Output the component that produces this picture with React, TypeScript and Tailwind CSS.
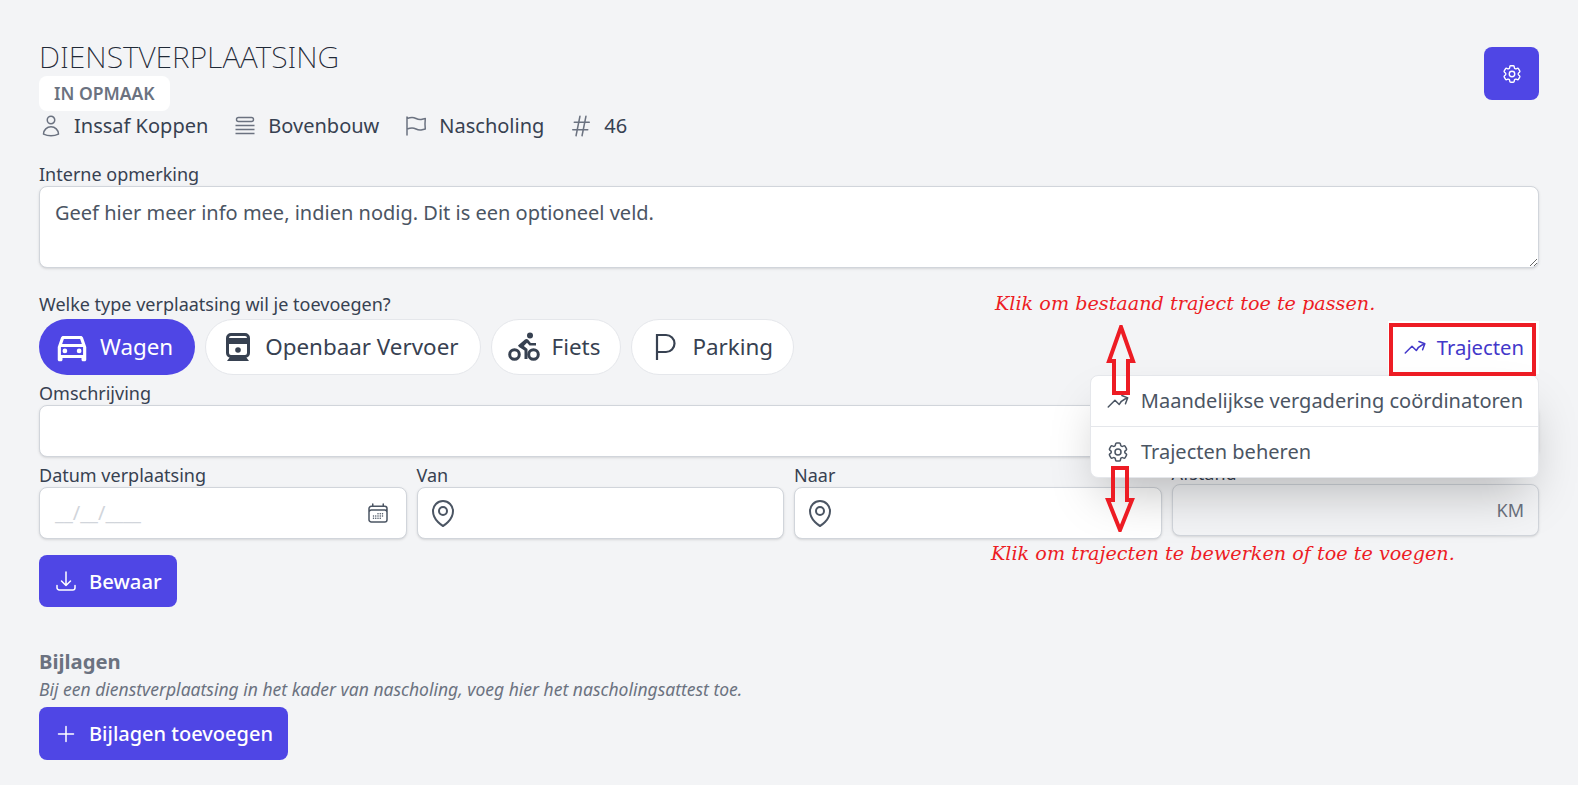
import {
  HiOutlineArrowDownTray,
  HiOutlineArrowTrendingUp,
  HiOutlineCalendarDays,
  HiOutlineCog6Tooth,
  HiOutlineFlag,
  HiOutlineHashtag,
  HiOutlineMapPin,
  HiOutlinePlus,
  HiOutlineUser,
} from "react-icons/hi2";
import { MdOutlineDirectionsCar } from "react-icons/md";

const inputClass =
  "bg-white border border-[#d1d5db] rounded-lg shadow-sm h-[52px] flex items-center";
const labelClass = "text-[18px] leading-[22px] text-[#374151]";
const noteClass =
  "absolute text-[#ed1c24] text-[19.2px] leading-[24px] italic whitespace-nowrap [font-family:'DejaVu_Serif',cursive]";

function StackIcon() {
  return (
    <svg viewBox="0 0 24 24" className="w-[24px] h-[24px]" fill="none" stroke="currentColor" strokeWidth="1.4">
      <rect x="3.5" y="3.5" width="17" height="4" rx="2" />
      <path d="M2.5 11.5h19M2.5 15.5h19M2.5 19.5h19" />
    </svg>
  );
}

function TrainIcon() {
  return (
    <svg viewBox="0 0 26 28" className="w-[26px] h-[28px]" fill="currentColor">
      <path
        fillRule="evenodd"
        d="M6 0h14a5 5 0 0 1 5 5v15a5 5 0 0 1-5 5H6a5 5 0 0 1-5-5V5a5 5 0 0 1 5-5Zm0 3a2 2 0 0 0-2 2v15a2 2 0 0 0 2 2h14a2 2 0 0 0 2-2V5a2 2 0 0 0-2-2H6Z"
      />
      <rect x="4" y="5" width="18" height="6" />
      <circle cx="13" cy="17" r="2.8" />
      <path d="M5 24h16l3 4H2Z" />
    </svg>
  );
}

function BikeIcon() {
  return (
    <svg viewBox="0 0 32 30" className="w-[32px] h-[30px]" fill="none" stroke="currentColor">
      <circle cx="6.5" cy="22.5" r="4.8" strokeWidth="3" />
      <circle cx="25.5" cy="22.5" r="4.8" strokeWidth="3" />
      <circle cx="22" cy="3.5" r="3" fill="currentColor" stroke="none" />
      <path
        d="M10 13.5 17 7.5c1-.8 2.4-.7 3.2.3l2.6 3.2H28v2.6h-6.5L19 10.8l-3.2 3.1 3.7 3.2V27h-3v-8.4l-5.5-3.6Z"
        fill="currentColor"
        stroke="none"
      />
    </svg>
  );
}

function ParkingIcon() {
  return (
    <svg viewBox="0 0 22 28" className="w-[22px] h-[28px]" fill="none" stroke="currentColor" strokeWidth="2.2">
      <path d="M2 27V2h9a8.5 8.5 0 0 1 0 17H2" />
    </svg>
  );
}

export default function App() {
  return (
    <div className="relative min-h-screen bg-[#f3f4f6] px-[39px] pt-[38px] pb-[25px] text-[#374151] [font-family:'Noto_Sans',sans-serif]">
      {/* Header */}
      <div className="flex justify-between items-start">
        <div>
          <h1 className="text-[30px] leading-[38px] font-extralight text-[#1f2937]">DIENSTVERPLAATSING</h1>
          <span className="inline-block bg-white rounded-lg px-[15px] h-[35px] leading-[35px] text-[17.5px] font-semibold text-[#6b7280]">
            IN OPMAAK
          </span>
          <div className="flex items-center h-[30px] text-[20px]">
            <HiOutlineUser className="w-[24px] h-[24px] text-[#6b7280] mr-[11px]" />
            <span className="mr-[25px]">Inssaf Koppen</span>
            <span className="text-[#6b7280] mr-[11px]"><StackIcon /></span>
            <span className="mr-[25px]">Bovenbouw</span>
            <HiOutlineFlag className="w-[24px] h-[24px] text-[#6b7280] mr-[11px]" />
            <span className="mr-[25px]">Nascholing</span>
            <HiOutlineHashtag className="w-[24px] h-[24px] text-[#6b7280] mr-[11px]" />
            <span>46</span>
          </div>
        </div>
        <button className="mt-[9px] w-[55px] h-[53px] rounded-lg bg-[#4f46e5] text-white flex items-center justify-center">
          <HiOutlineCog6Tooth className="w-[22px] h-[22px]" />
        </button>
      </div>

      {/* Opmerking */}
      <div className="mt-[22px]">
        <div className={labelClass}>Interne opmerking</div>
        <textarea
          className="block mt-[1px] w-full h-[82px] bg-white border border-[#d1d5db] rounded-lg shadow-sm px-[15px] py-[12px] text-[20px] leading-[28px] text-[#374151] placeholder:text-[#4b5563] outline-none"
          placeholder="Geef hier meer info mee, indien nodig. Dit is een optioneel veld."
        />
      </div>

      {/* Type */}
      <div className="mt-[25px] text-[18px] leading-[22px]">Welke type verplaatsing wil je toevoegen?</div>
      <div className="flex items-center justify-between mt-[4px]">
        <div className="flex items-center gap-[10px] text-[22.4px]">
          <button className="h-[56px] pl-[14px] pr-[22px] rounded-full flex items-center gap-[9px] bg-[#4f46e5] text-white">
            <MdOutlineDirectionsCar className="w-[38px] h-[38px]" />
            <span>Wagen</span>
          </button>
          <button className="h-[56px] pl-[19px] pr-[21px] rounded-full flex items-center gap-[14px] bg-white text-[#374151] border border-[#e5e7eb]">
            <TrainIcon />
            <span>Openbaar Vervoer</span>
          </button>
          <button className="h-[56px] pl-[16px] pr-[20px] rounded-full flex items-center gap-[12px] bg-white text-[#374151] border border-[#e5e7eb]">
            <BikeIcon />
            <span>Fiets</span>
          </button>
          <button className="h-[56px] pl-[23px] pr-[20px] rounded-full flex items-center gap-[15px] bg-white text-[#374151] border border-[#e5e7eb]">
            <ParkingIcon />
            <span>Parking</span>
          </button>
        </div>
        <button className="flex items-center gap-[10px] h-[53px] px-[15px] text-[20.25px] text-[#4338ca] bg-white">
          <HiOutlineArrowTrendingUp className="w-[24px] h-[24px]" />
          <span>Trajecten</span>
        </button>
      </div>

      {/* Omschrijving */}
      <div className="mt-[7px] text-[18px] leading-[22px]">Omschrijving</div>
      <div className={inputClass + " mt-[1px]"} />

      {/* Fields */}
      <div className="grid grid-cols-4 gap-[10px] mt-[7px]">
        <div>
          <div className={labelClass}>Datum verplaatsing</div>
          <div className={inputClass + " mt-[1px] justify-between pl-[15px] pr-[16px]"}>
            <span className="text-[#d1d5db] text-[20px]">__/__/____</span>
            <HiOutlineCalendarDays className="w-[24px] h-[24px] text-[#4b5563]" />
          </div>
        </div>
        <div>
          <div className={labelClass}>Van</div>
          <div className={inputClass + " mt-[1px] px-[9px]"}>
            <HiOutlineMapPin className="w-[32px] h-[32px] text-[#4b5563]" />
          </div>
        </div>
        <div>
          <div className={labelClass}>Naar</div>
          <div className={inputClass + " mt-[1px] px-[9px]"}>
            <HiOutlineMapPin className="w-[32px] h-[32px] text-[#4b5563]" />
          </div>
        </div>
        <div className="-mt-[2px]">
          <div className={labelClass}>Afstand</div>
          <div className="h-[52px] flex items-center justify-end px-[14px] rounded-lg border border-[#d1d5db] bg-[#f3f4f6] shadow-sm text-[18px] text-[#6b7280]">
            KM
          </div>
        </div>
      </div>

      <button className="mt-[16px] h-[52px] px-[15px] rounded-lg bg-[#4f46e5] text-white flex items-center gap-[11px] text-[20.25px] font-medium">
        <HiOutlineArrowDownTray className="w-[24px] h-[24px]" />
        Bewaar
      </button>

      {/* Bijlagen */}
      <div className="mt-[42px] text-[20.25px] leading-[24px] font-bold text-[#6b7280]">Bijlagen</div>
      <div className="mt-[4px] text-[17.5px] leading-[24px] italic text-[#6b7280]">
        Bij een dienstverplaatsing in het kader van nascholing, voeg hier het nascholingsattest toe.
      </div>
      <button className="mt-[6px] h-[53px] px-[15px] rounded-lg bg-[#4f46e5] text-white flex items-center gap-[11px] text-[20px] font-medium">
        <HiOutlinePlus className="w-[24px] h-[24px]" />
        Bijlagen toevoegen
      </button>

      {/* Open dropdown */}
      <div className="absolute left-[1090px] top-[375px] w-[449px] bg-white rounded-lg border border-[#e5e7eb] shadow-2xl text-[20px] text-[#4b5563]">
        <div className="flex items-center gap-[11px] h-[51px] px-[15px] border-b border-[#e5e7eb]">
          <HiOutlineArrowTrendingUp className="w-[24px] h-[24px]" />
          <span className="whitespace-nowrap">Maandelijkse vergadering coördinatoren</span>
        </div>
        <div className="flex items-center gap-[11px] h-[50px] px-[15px]">
          <HiOutlineCog6Tooth className="w-[24px] h-[24px]" />
          <span>Trajecten beheren</span>
        </div>
      </div>

      {/* Annotations */}
      <div className="absolute left-[1389px] top-[323px] w-[147px] h-[53px] border-[4px] border-[#ed1c24]" />
      <svg className="absolute left-[1106px] top-[325px]" width="30" height="70" viewBox="0 0 30 70" fill="none" stroke="#ed1c24" strokeWidth="4">
        <path d="M15 2 L27 36 L22 36 L22 68 L8 68 L8 36 L3 36 Z" />
      </svg>
      <svg className="absolute left-[1105px] top-[466px]" width="30" height="66" viewBox="0 0 30 66" fill="none" stroke="#ed1c24" strokeWidth="4">
        <path d="M15 64 L27 34 L22 34 L22 2 L8 2 L8 34 L3 34 Z" />
      </svg>
      <div className={noteClass + " left-[995px] top-[292px]"}>Klik om bestaand traject toe te passen.</div>
      <div className={noteClass + " left-[991px] top-[542px]"}>Klik om trajecten te bewerken of toe te voegen.</div>
    </div>
  );
}
